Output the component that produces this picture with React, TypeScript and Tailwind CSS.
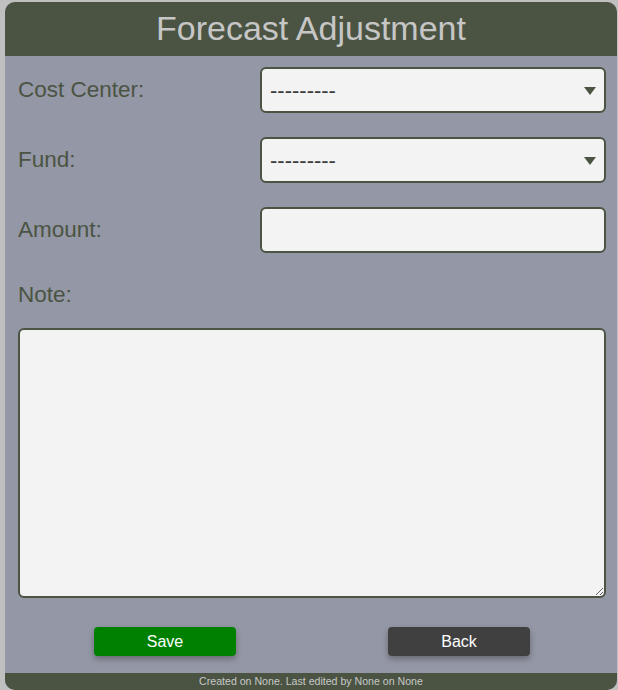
import React, { useState } from 'react';

const labelCls = "text-[22.5px] text-[#4b5443] leading-none";
const fieldCls =
  "h-[46px] rounded-[6px] border-2 border-[#4b5443] bg-[#f3f3f3] px-[8px] text-[22px] text-[#3a3a3a] outline-none";

const SelectField = ({ value, onChange }: { value: string; onChange: (v: string) => void }) => (
  <div className="relative w-[346px]">
    <select
      value={value}
      onChange={(e) => onChange(e.target.value)}
      className={`${fieldCls} w-full appearance-none`}
    >
      <option value="">---------</option>
    </select>
    <svg
      className="pointer-events-none absolute right-[10px] top-[20px]"
      width="12"
      height="8"
      viewBox="0 0 12 8"
    >
      <path d="M0 0 L12 0 L6 8 Z" fill="#4b5443" />
    </svg>
  </div>
);

const App = () => {
  const [costCenter, setCostCenter] = useState('');
  const [fund, setFund] = useState('');
  const [amount, setAmount] = useState('');
  const [note, setNote] = useState('');

  return (
    <div
      className="min-h-[690px] bg-[#c0c0c0] pt-[2px] pl-[5px]"
      style={{ fontFamily: '"Liberation Sans", Arial, sans-serif' }}
    >
      <div className="w-[612px] h-[688px] rounded-[10px] overflow-hidden bg-[#9497a5] flex flex-col">
        <div className="h-[54px] bg-[#4b5443] flex items-center justify-center">
          <h1 className="text-[34px] text-[#c6c6c6] leading-none pb-[3px]">Forecast Adjustment</h1>
        </div>

        <div className="flex-1 pl-[13px] pt-[11px] pr-[11px]">
          <div className="flex flex-col gap-[24px]">
            <div className="flex items-center justify-between">
              <label className={labelCls}>Cost Center:</label>
              <SelectField value={costCenter} onChange={setCostCenter} />
            </div>
            <div className="flex items-center justify-between">
              <label className={labelCls}>Fund:</label>
              <SelectField value={fund} onChange={setFund} />
            </div>
            <div className="flex items-center justify-between">
              <label className={labelCls}>Amount:</label>
              <input
                value={amount}
                onChange={(e) => setAmount(e.target.value)}
                className={`${fieldCls} w-[346px]`}
              />
            </div>
          </div>

          <div className="mt-[28px] h-[28px] flex items-center">
            <label className={labelCls}>Note:</label>
          </div>

          <textarea
            value={note}
            onChange={(e) => setNote(e.target.value)}
            className="mt-[19px] block w-[588px] h-[270px] rounded-[6px] border-2 border-[#4b5443] bg-[#f3f3f3] p-[6px] text-[16px] outline-none"
          />

          <div className="mt-[29px] grid grid-cols-2 w-[588px]">
            <div className="flex justify-center">
              <button className="w-[142px] h-[29px] rounded-[4px] bg-[#008000] text-white text-[16px] shadow-[0_3px_6px_rgba(0,0,0,0.3)]">
                Save
              </button>
            </div>
            <div className="flex justify-center">
              <button className="w-[142px] h-[29px] rounded-[4px] bg-[#404040] text-white text-[16px] shadow-[0_3px_6px_rgba(0,0,0,0.3)]">
                Back
              </button>
            </div>
          </div>
        </div>

        <div className="h-[17px] bg-[#4b5443] flex items-center justify-center">
          <span className="text-[10.6px] text-[#c8c8c8] leading-none">
            Created on None. Last edited by None on None
          </span>
        </div>
      </div>
    </div>
  );
};

export default App;
